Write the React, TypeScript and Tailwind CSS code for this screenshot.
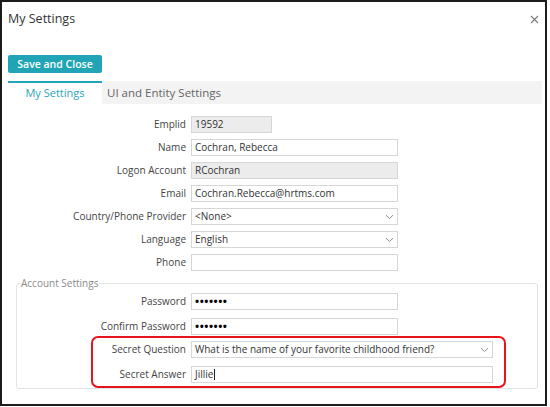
import React from "react";

// ─── Small pieces ─────────────────────────────────────────

function Chevron() {
  return (
    <svg width="9" height="6" viewBox="0 0 9 6" className="shrink-0">
      <path d="M1 1.2 L4.5 4.6 L8 1.2" fill="none" stroke="#8a8a8a" strokeWidth="1" />
    </svg>
  );
}

function CloseIcon() {
  return (
    <svg width="9" height="9" viewBox="0 0 9 9">
      <path d="M1 1 L8 8 M8 1 L1 8" stroke="#7a7a7a" strokeWidth="1.1" />
    </svg>
  );
}

interface FieldProps {
  value?: string;
  readOnly?: boolean;
  select?: boolean;
  width?: string;
  caret?: boolean;
  dots?: boolean;
}

function Field({ value = "", readOnly, select, width = "w-[207px]", caret, dots }: FieldProps) {
  return (
    <div
      className={`${width} h-[17px] flex items-center justify-between border border-[#d6d6d6] px-[3px] text-[10px] text-[#333] ${
        readOnly ? "bg-[#ececec]" : "bg-white"
      }`}
    >
      <span className={`flex items-center whitespace-nowrap ${dots ? "text-[11px] text-black tracking-[0.5px] font-bold" : ""}`}>
        {value}
        {caret && <span className="ml-[1px] inline-block w-[1px] h-[11px] bg-[#222]" />}
      </span>
      {select && <Chevron />}
    </div>
  );
}

function Row({
  label,
  labelWidth,
  className = "",
  children,
}: {
  label: string;
  labelWidth: string;
  className?: string;
  children: React.ReactNode;
}) {
  return (
    <div className={`flex items-center gap-[5px] ${className}`}>
      <div className={`${labelWidth} text-right text-[10px] text-[#444] whitespace-nowrap`}>{label}</div>
      {children}
    </div>
  );
}

// ─── Dialog ───────────────────────────────────────────────

export default function App() {
  const top = "w-[184px]";
  const inner = "w-[169px]";

  return (
    <div className="relative w-[550px] h-[407px] bg-white font-['Open_Sans',sans-serif]">
      <div className="w-[547px] h-[406px] border-2 border-[#1c1c1c] flex flex-col">
        {/* Header */}
        <div className="h-[34px] flex items-center justify-between pl-[6px] pr-[6px]">
          <span className="text-[12.5px] text-[#333]">My Settings</span>
          <CloseIcon />
        </div>

        {/* Save */}
        <div className="mt-[19px] ml-[6px] flex">
          <button className="w-[94px] h-[18px] rounded-[2px] bg-[#20a4b6] text-white text-[10.5px] font-semibold leading-none">
            Save and Close
          </button>
        </div>

        {/* Tabs */}
        <div className="mt-[8px] ml-[6px] mr-[3px] h-[23px] flex">
          <div className="w-[94px] border-t-2 border-[#20a4b6] flex items-center justify-center text-[11px] text-[#2ba5b9]">
            My Settings
          </div>
          <div className="flex-1 bg-[#f3f3f3] flex items-center pl-[5px] text-[11.5px] text-[#666]">
            UI and Entity Settings
          </div>
        </div>

        {/* Profile fields */}
        <div className="mt-[12px] flex flex-col gap-[6px]">
          <Row label="Emplid" labelWidth={top}>
            <Field value="19592" readOnly width="w-[81px]" />
          </Row>
          <Row label="Name" labelWidth={top}>
            <Field value="Cochran, Rebecca" />
          </Row>
          <Row label="Logon Account" labelWidth={top}>
            <Field value="RCochran" readOnly />
          </Row>
          <Row label="Email" labelWidth={top}>
            <Field value="Cochran.Rebecca@hrtms.com" />
          </Row>
          <Row label="Country/Phone Provider" labelWidth={top}>
            <Field value="<None>" select />
          </Row>
          <Row label="Language" labelWidth={top}>
            <Field value="English" select />
          </Row>
          <Row label="Phone" labelWidth={top}>
            <Field />
          </Row>
        </div>

        {/* Account settings */}
        <fieldset className="mt-[5px] ml-[14px] mr-[7px] h-[113px] border border-[#dfe4e8] rounded-[3px]">
          <legend className="ml-[3px] px-[1px] text-[10px] text-[#8a8a8a]">Account Settings</legend>
          <div className="flex flex-col pt-[2px]">
            <Row label="Password" labelWidth={inner}>
              <Field value="•••••••" dots />
            </Row>
            <Row label="Confirm Password" labelWidth={inner} className="mt-[8px]">
              <Field value="•••••••" dots />
            </Row>
            <Row label="Secret Question" labelWidth={inner} className="mt-[6px]">
              <Field value="What is the name of your favorite childhood friend?" select width="w-[302px]" />
            </Row>
            <Row label="Secret Answer" labelWidth={inner} className="mt-[8px]">
              <Field value="Jillie" caret width="w-[302px]" />
            </Row>
          </div>
        </fieldset>
      </div>

      {/* Highlight around the secret fields */}
      <div className="absolute left-[91px] top-[336px] w-[415px] h-[52px] border-2 border-[#e8141c] rounded-[7px]" />
    </div>
  );
}
